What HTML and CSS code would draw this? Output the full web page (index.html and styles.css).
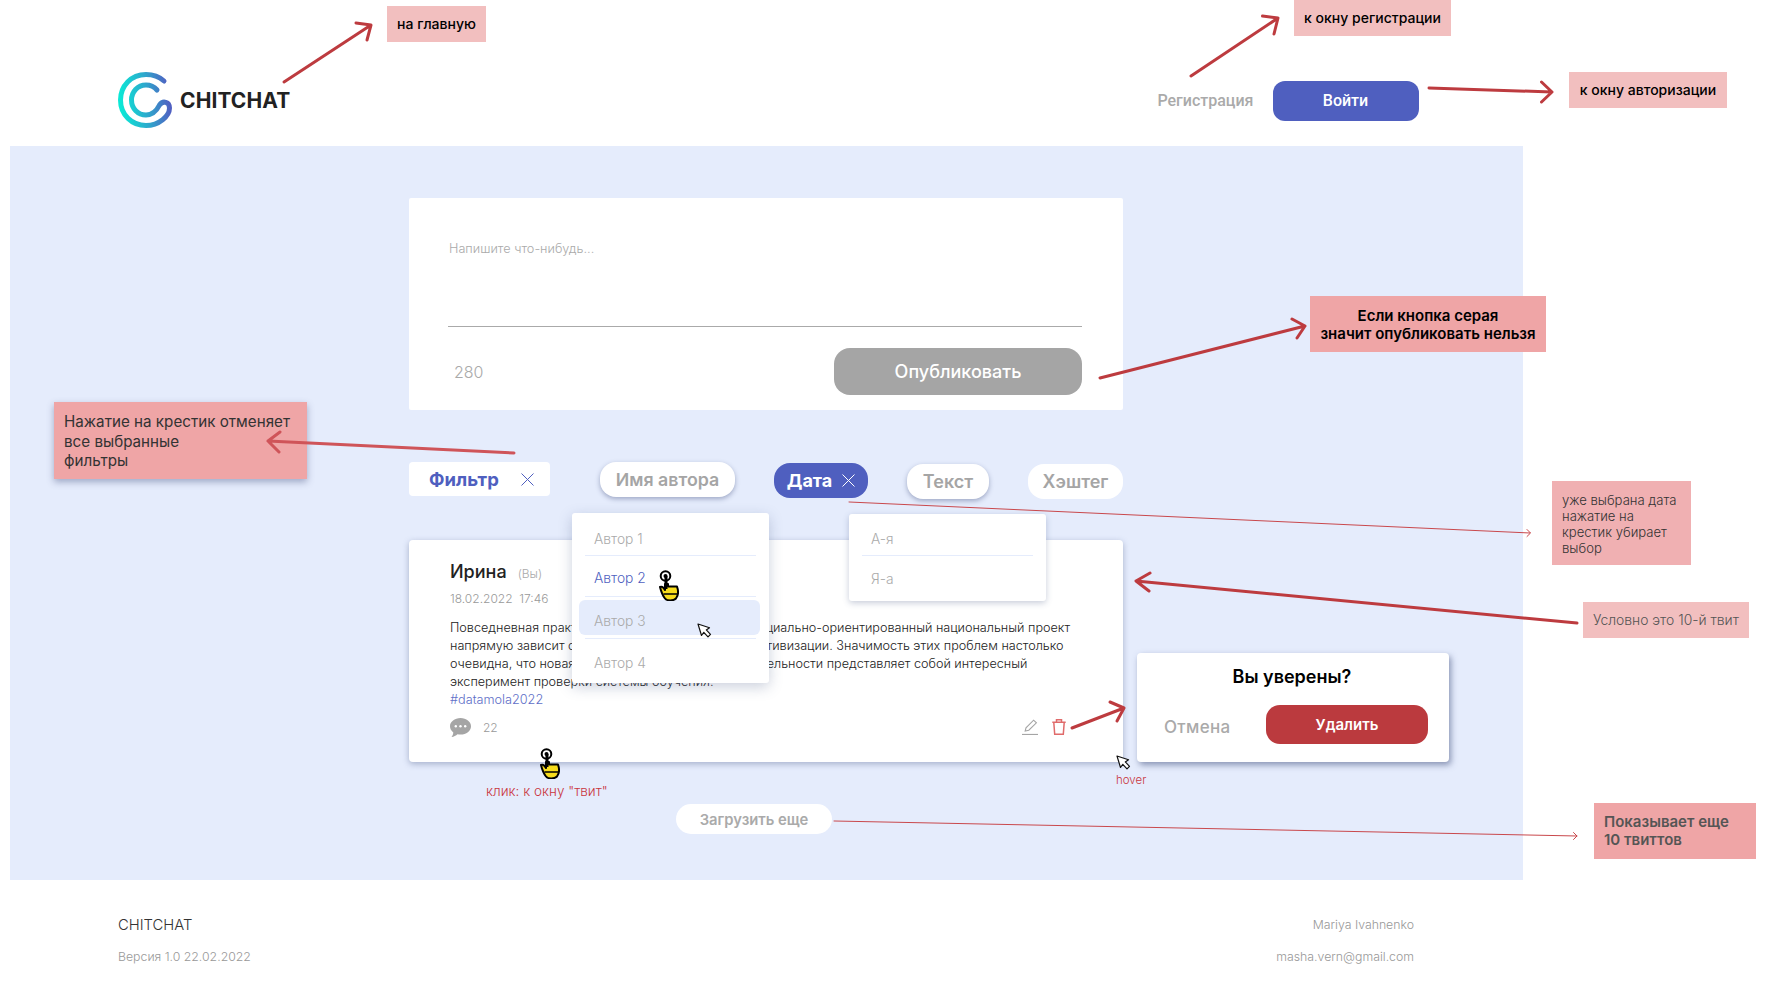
FILE: index.html
```html
<!DOCTYPE html>
<html lang="ru">
<head>
<meta charset="utf-8">
<title>CHITCHAT</title>
<link rel="stylesheet" href="styles.css">
</head>
<body>
<div class="page">
  <header class="site-header">
    <a class="brand">
      <svg class="brand-mark" viewBox="0 0 54 56" fill="none" stroke-linecap="round" stroke-linejoin="round">
        <defs>
          <linearGradient id="lg" x1="0" y1="0.6" x2="1" y2="0.5">
            <stop offset="0" stop-color="#0be8d6"/>
            <stop offset="0.55" stop-color="#2ea6cc"/>
            <stop offset="1" stop-color="#5060c2"/>
          </linearGradient>
        </defs>
        <path d="M46 9C41 4.500 35 2.500 28 2.500C13 2.500 2.500 14 2.500 28C2.500 43 14 53.500 28 53.500C41 53.500 51.500 44 51.500 36C51.500 30 45 28 41.500 33C38.500 39 34 43 28 43C20 43 13.500 36.500 13.500 28C13.500 20 19.500 13 28 13C32 13 36 14.500 39 18" stroke="url(#lg)" stroke-width="5"/>
      </svg>
      <span class="brand-name">CHITCHAT</span>
    </a>
    <nav class="auth">
      <a class="auth-link">Регистрация</a>
      <a class="btn-login">Войти</a>
    </nav>
  </header>

  <main class="board">
    <section class="composer">
      <div class="composer-input">Напишите что-нибудь...</div>
      <div class="composer-foot">
        <span class="counter">280</span>
        <button class="btn-publish">Опубликовать</button>
      </div>
    </section>

    <div class="filters">
      <div class="filter-main">
        <span>Фильтр</span>
        <svg class="x-icon" viewBox="0 0 13 13"><path d="M.5.5l12 12M12.500.5l-12 12"/></svg>
      </div>
      <div class="pill pill-shadow pill-author">Имя автора</div>
      <div class="pill pill-active pill-date">
        <span>Дата</span>
        <svg class="x-icon" viewBox="0 0 13 13"><path d="M.5.5l12 12M12.500.5l-12 12"/></svg>
      </div>
      <div class="pill pill-shadow pill-text">Текст</div>
      <div class="pill pill-tag">Хэштег</div>
    </div>

    <article class="tweet">
      <div class="tweet-head">
        <span class="tweet-author">Ирина</span>
        <span class="tweet-you">(Вы)</span>
      </div>
      <div class="tweet-date">18.02.2022&nbsp; 17:46</div>
      <p class="tweet-body">Повседневная практика обычно показывает, что социально-ориентированный национальный проект<br>напрямую зависит от систем массового участия активизации. Значимость этих проблем настолько<br>очевидна, что новая модель организационной деятельности представляет собой интересный<br>эксперимент проверки системы обучения.</p>
      <div class="tweet-tag">#datamola2022</div>
      <div class="tweet-foot">
        <svg class="comment-icon" viewBox="0 0 21 19">
          <path d="M10.500 0C4.700 0 0 3.700 0 8.300c0 2.400 1.300 4.600 3.300 6.100-.1 1.500-.8 3.400-1.800 4.600 2.300-.2 4.500-1.300 6-2.700 1 .2 2 .3 3 .3 5.800 0 10.500-3.700 10.500-8.300S16.300 0 10.500 0z" fill="#a5a5a5"/>
          <circle cx="5.800" cy="8.300" r="1.200" fill="#fff"/><circle cx="10.500" cy="8.300" r="1.200" fill="#fff"/><circle cx="15.200" cy="8.300" r="1.200" fill="#fff"/>
        </svg>
        <span class="comment-count">22</span>
        <span class="tweet-actions">
          <svg class="icon-edit" viewBox="0 0 16 16" fill="none" stroke="#a5a5a5" stroke-width="1.100"><path d="M3.200 12 L4 8.800 L11.600 1.200 L14.400 3.800 L6.800 11.200 Z"/><path d="M0 15.500H16" stroke-width="1.200"/></svg>
          <svg class="icon-trash" viewBox="0 0 14 16" fill="none" stroke="#e06b6b" stroke-width="1.500"><path d="M.3 3.300H13.700M4.500 3V.8H9.500V3M1.800 3.500L2.700 15.200H11.300L12.200 3.500"/></svg>
        </span>
      </div>
    </article>

    <button class="btn-more">Загрузить еще</button>
  </main>

  <footer class="site-footer">
    <div class="footer-left">
      <div class="footer-brand">CHITCHAT</div>
      <div class="footer-meta">Версия 1.0 22.02.2022</div>
    </div>
    <div class="footer-right">
      <div class="footer-meta footer-name">Mariya Ivahnenko</div>
      <div class="footer-meta">masha.vern@gmail.com</div>
    </div>
  </footer>

  <ul class="menu menu-author">
    <li class="menu-item">Автор 1</li>
    <li class="menu-item menu-item-blue">Автор 2</li>
    <li class="menu-item menu-item-hover">Автор 3</li>
    <li class="menu-item menu-item-last">Автор 4</li>
  </ul>
  <ul class="menu menu-date">
    <li class="menu-item">А-я</li>
    <li class="menu-item menu-item-last">Я-а</li>
  </ul>

  <div class="modal">
    <div class="modal-title">Вы уверены?</div>
    <div class="modal-actions">
      <span class="modal-cancel">Отмена</span>
      <button class="btn-delete">Удалить</button>
    </div>
  </div>

  <div class="note note-home">на главную</div>
  <div class="note note-reg">к окну регистрации</div>
  <div class="note note-login">к окну авторизации</div>
  <div class="note note-publish">Если кнопка серая<br>значит опубликовать нельзя</div>
  <div class="note note-filter">Нажатие на крестик отменяет<br>все выбранные<br>фильтры</div>
  <div class="note note-date">уже выбрана дата<br>нажатие на<br>крестик убирает<br>выбор</div>
  <div class="note note-tenth">Условно это 10-й твит</div>
  <div class="note note-more">Показывает еще<br>10 твиттов</div>
  <div class="hint hint-click">клик: к окну "твит"</div>
  <div class="hint hint-hover">hover</div>

  <svg class="arrows" viewBox="0 0 1789 996" fill="none" stroke-linecap="round" stroke-linejoin="round">
    <g stroke="#bd3b3f" stroke-width="3">
      <path d="M284 82L371 25M356 23L371 25L367 40"/>
      <path d="M1191 76L1278 18M1262.500 16L1278 18L1274 34"/>
      <path d="M1429 88L1552 92M1541.500 82L1552 92L1541.500 102"/>
      <path d="M1100 378L1305 326M1292 319L1305 326L1297 338"/>
      <path d="M1577 623L1136 581M1150 573L1136 581L1149 591"/>
      <path d="M1072 728L1124 708M1110 702L1124 708L1117 721"/>
    </g>
    <path d="M514 453L268 441M280 432L268 441L279 452" stroke="#cf5459" stroke-width="3"/>
    <g stroke="#c9484c" stroke-width="1">
      <path d="M849 502L1530 533M1527 529.500L1530.500 533L1527 536.500"/>
      <path d="M834 821L1577 836M1573.500 832.500L1577 836L1573.500 839.500"/>
    </g>
  </svg>

  <svg class="cursor-hand cursor-hand-a" viewBox="0 0 20 31">
    <path d="M1 17C3 16 5 18 6 20V14H9V16.500L18 16.500C19.500 21 19 26 17 28.500C14.500 31 8 31 6 28.500C4 26 2 21 1 17Z" fill="#f7dc1c" stroke="#000" stroke-width="2" stroke-linejoin="round"/>
    <path d="M4.500 24H18" stroke="#000" stroke-width="1.500"/>
    <circle cx="6.500" cy="6" r="4.800" fill="#fff" stroke="#000" stroke-width="2"/>
    <circle cx="6.500" cy="6" r="2" fill="#000"/>
    <path d="M7 6V19" stroke="#000" stroke-width="3"/>
  </svg>
  <svg class="cursor-hand cursor-hand-b" viewBox="0 0 20 31">
    <path d="M1 17C3 16 5 18 6 20V14H9V16.500L18 16.500C19.500 21 19 26 17 28.500C14.500 31 8 31 6 28.500C4 26 2 21 1 17Z" fill="#f7dc1c" stroke="#000" stroke-width="2" stroke-linejoin="round"/>
    <path d="M4.500 24H18" stroke="#000" stroke-width="1.500"/>
    <circle cx="6.500" cy="6" r="4.800" fill="#fff" stroke="#000" stroke-width="2"/>
    <circle cx="6.500" cy="6" r="2" fill="#000"/>
    <path d="M7 6V19" stroke="#000" stroke-width="3"/>
  </svg>
  <svg class="cursor-arrow cursor-arrow-a" viewBox="0 0 15 15">
    <path d="M1 1L4.500 12.500L6.800 9.300L11 13.800L13.500 11.300L9.300 6.900L12.500 4.700Z" fill="#fff" stroke="#111" stroke-width="1.200" stroke-linejoin="round"/>
  </svg>
  <svg class="cursor-arrow cursor-arrow-b" viewBox="0 0 15 15">
    <path d="M1 1L4.500 12.500L6.800 9.300L11 13.800L13.500 11.300L9.300 6.900L12.500 4.700Z" fill="#fff" stroke="#111" stroke-width="1.200" stroke-linejoin="round"/>
  </svg>
</div>
</body>
</html>
```

FILE: styles.css
```css
* { box-sizing: border-box; }
html, body { margin: 0; padding: 0; background: #fff; }
body { font-family: Inter, "Noto Sans", sans-serif; color: #222; }
button { font-family: inherit; border: 0; padding: 0; cursor: pointer; }

.page { position: relative; width: 1789px; height: 996px; overflow: hidden; }

/* header */
.site-header { height: 146px; padding: 72px 370.5px 0 118px; display: flex; justify-content: space-between; align-items: flex-start; }
.brand { display: flex; align-items: flex-start; gap: 8px; }
.brand-mark { width: 54px; height: 56px; display: block; }
.brand-name { margin-top: 16px; font-size: 21px; line-height: 26px; font-weight: 700; letter-spacing: .1px; color: #222; }
.auth { display: flex; align-items: center; gap: 19px; margin-top: 9px; }
.auth-link { font-family: Roboto, sans-serif; font-size: 16px; font-weight: 500; color: #aaa; padding-bottom: 1px; }
.btn-login { width: 146px; height: 40px; padding-bottom: 1px; background: #4f5fbf; border-radius: 12px; color: #fff; font-family: Roboto, sans-serif; font-size: 16px; font-weight: 500; display: flex; align-items: center; justify-content: center; }

/* board */
.board { width: 1513px; height: 734px; margin-left: 10px; padding: 52px 0 0 399px; background: #e5ecfc; }

.composer { width: 714px; height: 212px; background: #fff; border-radius: 2px; padding: 38px 41px 0 39px; }
.composer-input { height: 91px; margin-bottom: 21px; border-bottom: 1px solid #aaa; font-size: 12.700px; line-height: 26px; font-weight: 300; color: #aaa; padding-left: 1px; }
.composer-foot { display: flex; justify-content: space-between; align-items: center; }
.counter { padding-left: 6px; font-size: 16px; font-weight: 300; color: #aaa; }
.btn-publish { width: 248px; height: 47px; background: #a5a5a5; border-radius: 16px; color: #fff; font-size: 18px; font-weight: 500; }

.filters { display: flex; align-items: flex-start; margin-top: 52px; height: 37px; }
.filter-main { width: 141px; height: 34px; background: #fff; border-radius: 4px; margin-right: 50px; padding: 0 16px 0 20px; display: flex; align-items: center; justify-content: space-between; color: #4f5fbf; font-size: 18.500px; font-weight: 700; }
.x-icon { width: 13px; height: 13px; stroke: #4f5fbf; stroke-width: 1; fill: none; display: block; }
.pill { height: 35px; border-radius: 16px; background: #fff; color: #a5a5a5; font-size: 18px; font-weight: 600; display: flex; align-items: center; justify-content: center; }
.pill-shadow { box-shadow: 0 2px 5px rgba(70, 85, 130, .45); }
.pill-author { width: 135px; margin-right: 39px; font-size: 17.800px; }
.pill-active { background: #4f5fbf; color: #fff; font-weight: 700; gap: 10px; }
.pill-active .x-icon { stroke: #fff; }
.pill-date { width: 94px; margin: 1px 39px 0 0; }
.pill-text { width: 82px; margin: 2px 39px 0 0; }
.pill-tag { width: 95px; margin-top: 2px; }

.tweet { width: 714px; height: 222px; margin-top: 41px; padding: 21px 41px 0; background: #fff; border-radius: 4px; box-shadow: 0 2px 6px rgba(70, 85, 130, .4); }
.tweet-head { display: flex; align-items: baseline; gap: 11px; height: 24px; }
.tweet-author { font-size: 18px; font-weight: 500; color: #222; }
.tweet-you { font-size: 12px; font-weight: 300; color: #aaa; }
.tweet-date { margin-top: 6px; font-size: 12px; line-height: 16px; font-weight: 300; color: #999; }
.tweet-body { margin: 12px 0 0; font-size: 12.650px; line-height: 18px; font-weight: 300; color: #222; white-space: nowrap; }
.tweet-tag { font-size: 12.700px; line-height: 18px; font-weight: 300; color: #5f6fc8; }
.tweet-foot { display: flex; align-items: center; margin-top: 8px; height: 20px; }
.comment-icon { width: 21px; height: 19px; display: block; }
.comment-count { margin-left: 12px; font-size: 12px; font-weight: 300; color: #999; }
.tweet-actions { margin-left: auto; margin-right: 16px; display: flex; gap: 14px; align-items: center; }
.icon-edit { width: 16px; height: 16px; display: block; }
.icon-trash { width: 14px; height: 16px; display: block; }

.btn-more { display: block; width: 156px; height: 30px; margin: 42px 0 0 267px; padding-top: 2px; border-radius: 15px; background: #fff; color: #aaa; font-size: 14.800px; font-weight: 600; }

/* footer */
.site-footer { display: flex; justify-content: space-between; padding: 35px 375px 0 118px; }
.footer-brand { font-size: 14.800px; line-height: 20px; font-weight: 300; color: #333; }
.footer-meta { margin-top: 12px; font-size: 12.300px; line-height: 20px; font-weight: 300; color: #999; }
.footer-right { text-align: right; }
.footer-name { margin-top: 0; }

/* floating menus */
.menu { position: absolute; margin: 0; padding: 7px 13px 0; list-style: none; width: 197px; background: #fff; border-radius: 3px; box-shadow: 0 4px 14px rgba(70, 85, 130, .28); }
.menu-author { left: 572px; top: 513px; height: 170px; }
.menu-date { left: 849px; top: 514px; height: 87px; padding-top: 6px; box-shadow: 0 2px 6px rgba(70, 85, 130, .3); }
.menu-item { height: 36px; padding: 11px 0 0 9px; border-bottom: 1px solid #e5ecfc; font-size: 13.800px; line-height: 16px; font-weight: 300; color: #aaa; }
.menu-item-blue { height: 41px; padding-top: 14px; color: #4f5fbf; }
.menu-item-hover { height: 42px; padding-top: 16px; position: relative; z-index: 0; }
.menu-item-hover::before { content: ""; position: absolute; z-index: -1; left: -6px; width: 181px; top: 3px; height: 35px; background: #e5ecfc; border-radius: 6px; }
.menu-item-last { border-bottom: 0; padding-top: 15px; }
.menu-author .menu-item-last { padding-top: 16px; }

/* modal */
.modal { position: absolute; left: 1137px; top: 653px; width: 312px; height: 109px; background: #fff; border-radius: 4px; padding: 12px 21px 0 27px; box-shadow: 2px 3px 6px rgba(60, 75, 120, .55); }
.modal-title { text-align: center; margin-left: -8px; font-size: 18px; line-height: 24px; font-weight: 600; color: #000; }
.modal-actions { display: flex; justify-content: space-between; align-items: center; margin-top: 16px; }
.modal-cancel { font-size: 17px; font-weight: 500; color: #aaa; margin-top: 5px; letter-spacing: .3px; }
.btn-delete { width: 162px; height: 39px; background: #bb3a3e; border-radius: 14px; color: #fff; font-size: 15px; font-weight: 600; }

/* annotations */
.note { position: absolute; font-size: 14px; }
.note-home, .note-reg, .note-login { background: #f2bfbf; height: 36px; padding-bottom: 2px; display: flex; align-items: center; justify-content: center; font-weight: 500; color: #000; }
.note-home { left: 387px; top: 6px; width: 99px; }
.note-reg { left: 1294px; top: 0; width: 157px; }
.note-login { left: 1569px; top: 72px; width: 158px; }
.note-publish { left: 1310px; top: 296px; width: 236px; height: 56px; padding-top: 11px; background: #efa5a6; text-align: center; font-size: 15px; line-height: 18px; font-weight: 600; color: #000; }
.note-filter { left: 54px; top: 402px; width: 253px; height: 77px; padding: 10px 0 0 10px; background: #efa5a6; font-size: 15.200px; line-height: 19.500px; font-weight: 400; color: #333; box-shadow: 0 3px 7px rgba(70, 85, 130, .45); }
.note-date { left: 1552px; top: 481px; width: 139px; height: 84px; padding: 11px 0 0 10px; background: #f0b0b2; font-size: 13.100px; line-height: 16px; font-weight: 300; color: #333; }
.note-tenth { left: 1583px; top: 602px; width: 166px; height: 36px; padding-left: 10px; display: flex; align-items: center; background: #f2bfbf; font-size: 13.900px; font-weight: 300; color: #555; }
.note-more { left: 1594px; top: 803px; width: 162px; height: 56px; padding: 10px 0 0 10px; background: #efa5a6; font-size: 15px; line-height: 18px; font-weight: 600; color: #555; }

.hint { position: absolute; color: #c9363e; font-weight: 300; }
.hint-click { left: 486px; top: 783px; font-size: 13.500px; line-height: 16px; }
.hint-hover { left: 1116px; top: 772px; font-size: 11.500px; line-height: 16px; }

.arrows { position: absolute; left: 0; top: 0; width: 1789px; height: 996px; pointer-events: none; }
.cursor-hand { position: absolute; width: 20px; height: 31px; }
.cursor-hand-a { left: 659px; top: 570px; }
.cursor-hand-b { left: 540px; top: 748px; }
.cursor-arrow { position: absolute; width: 15px; height: 15px; }
.cursor-arrow-a { left: 697px; top: 623px; }
.cursor-arrow-b { left: 1116px; top: 755px; }
```
